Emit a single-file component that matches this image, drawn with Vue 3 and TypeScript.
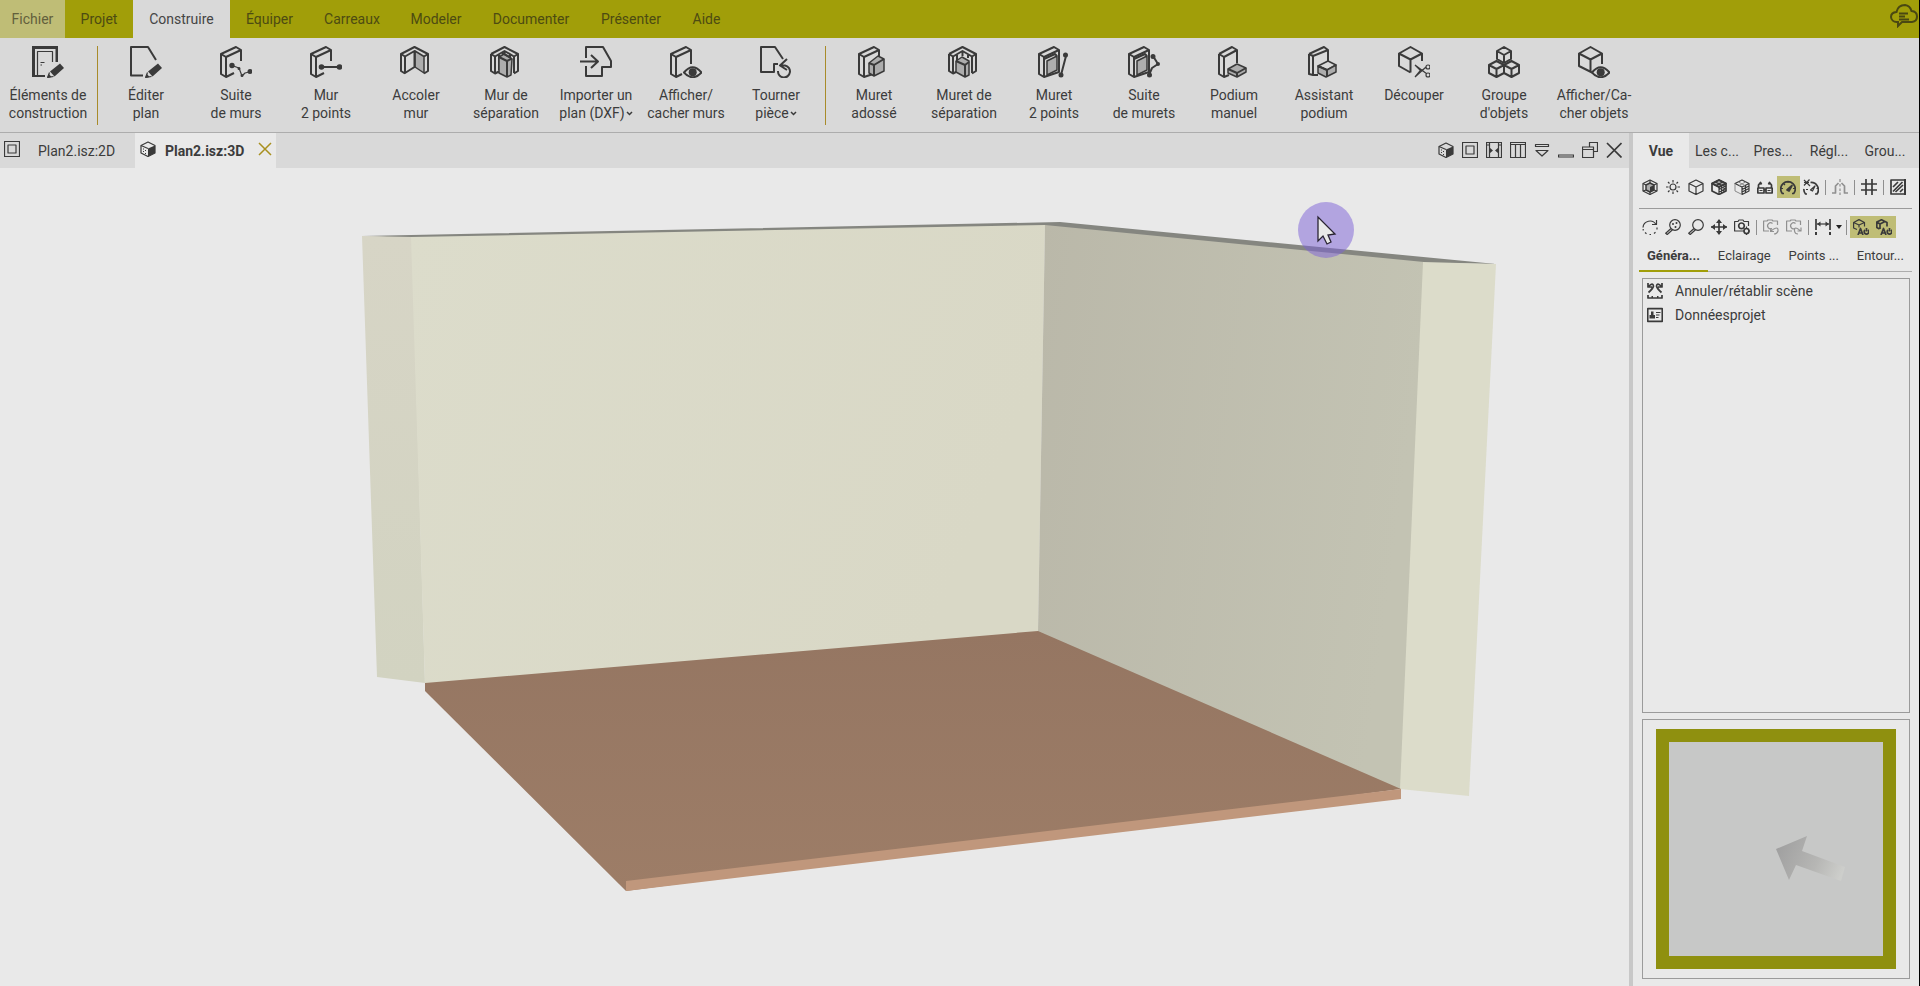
<script setup lang="ts">
import { ref } from 'vue'

type Kind = 'line' | 'thin' | 'solid' | 'shade' | 'paper'
type Shape = [Kind, string]

const dot = (x: number, y: number, r: number): string =>
  `M${x - r} ${y}a${r} ${r} 0 1 0 ${2 * r} 0a${r} ${r} 0 1 0 ${-2 * r} 0z`

const pencil: Shape[] = [
  ['solid', 'M18 25.5L28 17.5L32 22L22.500 30.500z'],
  ['thin', 'M17.500 26.500L15.700 31.300L21.500 30.500'],
  ['solid', 'M17 28L15 32L19.500 31z'],
]
const slab: Shape[] = [
  ['line', 'M21 15V4L16 1L1 8V28L6 31L14 27'],
  ['line', 'M1 8L6 11L21 4M6 11V31'],
]
const eye: Shape[] = [
  ['line', 'M14 26.500Q22.500 16 31.500 26.500Q22.500 36 14 26.500z'],
  ['solid', dot(22.700, 26.300, 4)],
]
const pages: Shape[] = [
  ['line', 'M1 8L16 1L21 4V26L6 31L1 28z'],
  ['line', 'M1 8L6 11L21 4M6 11V31'],
]
const cornerWalls: Shape[] = [
  ['line', 'M1 8L14.500 1L28 8V25L24 27.500M1 8V25L5 27.500L9 25.500'],
  ['line', 'M1 8L5 10.500L14.500 5L24 10.500L28 8M5 10.500V27M24 10.500V27M14.500 5V10M9 9V24M20 9V12'],
]
const cube: Shape[] = [['line', 'M14 26.500L1 20V7.500L12.500 1L24 7.500V18M1 7.500L12.500 13.500L24 7.500M12.500 13.500V26']]

const icons: Record<string, Shape[]> = {
  door: [
    ['solid', 'M0 0H26V16H23.500V3H3V29H13V31H0z'],
    ['thin', 'M5.500 29V5.500H20.500V16'],
    ['thin', 'M8.500 16.500H12.500M8.500 19H10'],
    ...pencil,
  ],
  edit: [['line', 'M13 29.500H1V1H18L26 14'], ...pencil],
  suite: [...slab, ['thin', 'M12 19.500L19 22L22 30L25 27L31 25.500'], ['solid', dot(12, 19.500, 2.700) + dot(19, 22.500, 1.500) + dot(30, 25.500, 2.500) + dot(22, 29.500, 1.500)]],
  two: [...slab, ['line', 'M12 21H30'], ['solid', dot(11.500, 21, 2.800) + dot(29.500, 21, 2.800)]],
  join: [
    ['line', 'M5 27.500L1 25V8L14.500 1L28 8V25L24 27.500'],
    ['shade', 'M15 5L24 10.500V27L15 21z'],
    ['line', 'M1 8L5 10.500L14.500 5V21L5 27V10.500M24 10.500L28 8'],
  ],
  partition: [
    ...cornerWalls,
    ['shade', 'M9 11L14 8L22 13L21 29L17 31L9 27z'],
    ['line', 'M9 11L17 15L22 12.500M17 15V31M12 7L20 11'],
  ],
  import: [['line', 'M6 12V1H23L31 15V21H22V30H6V20'], ['line', 'M0 15.500H18M11 9L18 15.500L11 22']],
  showWall: [['line', 'M21 18V4L16 1L1 8V28L6 31L12 28'], ['line', 'M1 8L6 11L21 4M6 11V31'], ...eye],
  turn: [
    ['line', 'M18 18H14V26H1V1H15L23 13'],
    ['line', 'M20 19.500H25A6 6 0 1 1 18 25M27 13L20 19.500L27 24'],
  ],
  lean: [...pages, ['shade', 'M11 17L20 10L26 13V25L16 30L11 27z'], ['line', 'M11 17L16 19L26 13M16 19V30']],
  lowPartition: [...cornerWalls, ['shade', 'M8 15L14 11L21 15V29L17 31L8 26z'], ['line', 'M8 15L17 19L21 16M17 19V31']],
  lowTwo: [...pages, ['shade', 'M9 15L19 10V24L9 29z'], ['line', 'M6 13L17 8L19 10M28 10L23 29'], ['solid', dot(27.500, 9, 2.500) + dot(23, 29, 2.500)]],
  lowSuite: [...pages, ['shade', 'M9 15L19 10V24L9 29z'], ['line', 'M6 13L17 8L19 10M25 10L30 18L24 22L21 29'], ['solid', dot(25, 10.500, 2.500) + dot(30, 18, 2) + dot(21.500, 29, 2.500)]],
  podium: [
    ['line', 'M1 8L14 1L19 4V17M1 8V28L6 31L11 29M1 8L6 11L19 4M6 11V31'],
    ['shade', 'M10 23L19 18L28 22V26L19 31L10 27z'],
    ['line', 'M10 23L19 27L28 22M19 27V31'],
  ],
  podiumHelp: [
    ['line', 'M1 8L16 1L20 4V15M1 8V28L5 29M1 8L5 10L20 4M5 10V29L10 29'],
    ['paper', 'M10 20L20 15L28 19L19 24z'],
    ['shade', 'M19 24L28 19V26L18 31L10 27V20z'],
    ['line', 'M10 20L19 24V31'],
  ],
  cut: [
    ['line', 'M12.500 26.500L1 20V7.500L12.500 1L24 7.500V15M1 7.500L12.500 13.500L24 7.500M12.500 13.500V26.500'],
    ['thin', 'M17 19L29 28M17 31L28 21M17 19L23 25M17 31L22 25' + dot(30, 21, 2) + dot(30, 29, 2)],
  ],
  group: [
    ['line', 'M16 1L23 5V13L16 17L9 13V5zM9 5L16 9L23 5M16 9V17'],
    ['line', 'M8.500 15L16 19V27L8.500 31L1 27V19zM1 19L8.500 23L16 19M8.500 23V31'],
    ['line', 'M23.500 15L31 19V27L23.500 31L16 27V19zM16 19L23.500 23L31 19M23.500 23V31'],
  ],
  showObject: [...cube, ...eye],
}

const small: Record<string, Shape[]> = {
  cubeSolid: [['thin', 'M1 4.500L8 1L15 4.500V12L8 15.500L1 12z'], ['solid', 'M8 7.500L15 4.500V12L8 15.500z'], ['thin', 'M1 4.500L8 7.500'], ['solid', 'M3 7.500h1v1h-1zM5 9h1v1h-1zM3 10h1v1h-1zM5 12h1v1h-1z']],
  frame: [['thin', 'M.5 .5H15.500V15.500H.5zM4 4H12V12H4z']],
  split: [['thin', 'M.5 .5H15.500V15.500H.5zM3.500 .5V15.500M12.500 .5V15.500M.5 3H3.500M12.500 3H15.500'], ['solid', 'M3.500 5.500L7 8.500L3.500 11.500zM12.500 5.500L9 8.500L12.500 11.500z']],
  columns: [['thin', 'M.5 .5H15.500V15.500H.5zM.5 2.500H15.500M5.500 2.500V15.500M10.500 2.500V15.500']],
  drop: [['thin', 'M1.500 2.500H14.500V4.500H1.500zM2 8.500H14L8 14z']],
  minimise: [['thin', 'M.5 13H15.500V15H.5z']],
  restore: [['thin', 'M.5 5H11.500V15.500H.5zM.5 7.500H11.500M7.500 5V.5H15.500V9.500H11.500']],
  close: [['line', 'M1 1L15.500 15.500M15.500 1L1 15.500']],
  cubeFull: [
    ['thin', 'M1 4.500L8 1L15 4.500V12L8 15.500L1 12z'],
    ['shade', 'M4 6L8 4L12 6V11L8 13L4 11z'],
    ['solid', 'M8 8L12 6V11L8 13z'],
    ['thin', 'M1 4.500L4 6M15 4.500L12 6M8 1V4M8 13V15.500M1 12L4 11M15 12L12 11'],
  ],
  sun: [['thin', dot(8, 8, 3) + 'M8 1V3.500M8 12.500V15M1 8H3.500M12.500 8H15M3 3L4.500 4.500M11.500 11.500L13 13M3 13L4.500 11.500M11.500 4.500L13 3']],
  cubeLine: [['thin', 'M1 4.500L8 1L15 4.500V12L8 15.500L1 12zM1 4.500L8 8L15 4.500M8 8V15.500']],
  cubeDark: [
    ['shade', 'M1 4.500L8 1L15 4.500L8 8z'],
    ['line', 'M1 4.500L8 1L15 4.500V12L8 15.500L1 12zM1 4.500L8 8L15 4.500'],
    ['thin', 'M8 8V15M10.500 7V14M13 5.500V13M8 10.500L15 7M8 13L15 9.500M4.500 3L11 6.500M11.500 3L5 6.500'],
  ],
  cubeGrid: [
    ['thin', 'M1 4.500L8 1L15 4.500L8 8zM8 8V15.500L15 12V4.500M11.500 6.500V14M8 10.500L15 7M8 13L15 9.500'],
    ['hair', 'M1 4.500V12L8 15.500M4.500 3L11 6.500M11.500 3L5 6.500'] as unknown as Shape,
  ],
  glasses: [['line', 'M.8 9H7V14H.8zM9 9H15.200V14H9zM7 11H9M1.500 9V6L3.500 3.500L4.500 5.500M14.500 9V6L12.500 3.500L11.500 5.500'], ['thin', 'M2.500 11.500H5.500M10.500 11.500H13.500']],
  gauge: [['line', 'M4 14.500H2.300A7.300 7.300 0 1 1 13.700 14.500H12'], ['thin', 'M1 9.500H3M13 9.500H15M3.500 4.500L5 6M8 2V4'], ['line', 'M7 11L12 6.500L9 12z']],
  gaugeCross: [['line', 'M4 15H2.500A6 6 0 0 1 1 10M7.500 3.500A7.300 7.300 0 0 1 14 15H12'], ['thin', 'M1 1L7 7M6.500 .5L1 6.500M1 3.500H6M7.500 11L12 7L9.500 12zM13.500 9.500H15'], ['thin', 'M5 10.500H3']],
  bell: [['line', 'M0 14H3.500V7L6.500 4M16 14H12.500V7L9.500 4'], ['thin', 'M8 0V3M8 5V7.500M8 9.500V12M8 13.500V16']],
  grid: [['line', 'M0 5H16M0 11H16M5 0V16M11 0V16']],
  hatch: [['line', 'M1 1H15V15H1z'], ['line', 'M3 8L8 3M3 12.500L12.500 3M5.500 13L13 6M10 13L13 10'], ['solid', 'M14 0H16V16H14z']],
  rotate: [['thin', 'M14.500 1V5.500H10'], ['thin', 'M14 5.500A7 7 0 0 0 1 8.500'], ['thin', 'M1.200 10V11.500M3 13.500L4.500 14.700M7.500 15.500H9M12 14.500L13.500 13.200M15 10.500V8.500']],
  zoomPlus: [['thin', dot(10, 6, 5.300) + 'M6 9.500L.7 14.300L2.200 15.500L7.500 10.800'], ['solid', dot(8, 5, 1) + dot(11.500, 4, 1) + dot(10.500, 8, 1)]],
  zoom: [['thin', dot(10, 6, 5.300) + 'M6 9.500L.7 14.300L2.200 15.500L7.500 10.800']],
  move: [['line', 'M0 8H16M8 1V15'], ['solid', 'M8 0L5 4H11zM8 16L5 12H11zM0 8L4 5V11zM16 8L12 5V11z']],
  camera: [['thin', 'M8 12H.6V2.500H4L5 1H9L10 2.500H14.500V7'], ['line', dot(7.500, 6.800, 2.800)], ['line', dot(12.500, 12, 2.500)], ['thin', 'M12.500 7.500V9.500M12.500 14.500V16M8 12H10M15 12H16']],
  cameraUndo: [['thin', 'M6 12H.6V2H4L5 1H9L10 2H14.500V6M9 9.500A3 3 0 1 1 9.500 4.500'], ['thin', 'M8 9L7.500 12.500L11 12.500M8 12Q15.500 6 15 12Q14 15 11 15']],
  cameraRedo: [['thin', 'M6 12H.6V2H4L5 1H9L10 2H14.500V6M9 9.500A3 3 0 1 1 9.500 4.500'], ['thin', 'M15 8.500V12H11.500M14.500 12Q8 6 8.500 12Q9 15 12 15']],
  measure: [['line', 'M1 0V11M15 0V11'], ['thin', 'M2 5H14'], ['solid', 'M2 5L5.500 2.500V7.500zM14 5L10.500 2.500V7.500zM0 13H2V16H0zM14 13H16V16H14z']],
  autoCube: [['thin', 'M4 10.500L.6 9V3.500L6 .6L11.500 3.500V7.500M.6 3.500L6 6L11.500 3.500M6 6V8.500'], ['line', 'M5 16L7.500 9.500L10 16M6 14H9'], ['line', 'M12 11A2.300 2.300 0 1 0 15 11M13.500 9V12.500']],
  autoWall: [['line', 'M3.500 10L.8 8.500V3L5.500 .8L11 3.500V7.500M.8 3L4 5V10M4 5L9 2.500'], ['line', 'M5 16L7.500 9.500L10 16M6 14H9'], ['line', 'M12 11A2.300 2.300 0 1 0 15 11M13.500 9V12.500']],
  undoScene: [['line', 'M1 0V4H5M1.500 3.500Q6 -1 6.500 3Q6 5.500 1.500 9.500M15 0V4H11M14.500 3.500Q10 -1 9.500 3Q10 5.500 14.500 9.500M1 12V15H15V12'], ['solid', 'M4.500 13H6V15H4.500zM10 13H11.500V15H10z']],
  data: [['line', 'M.7 1.700H15.300V14.300H.7z'], ['solid', 'M4 4.500H6.500V8H8V11.500H2.500V8H4z'], ['thin', 'M9 5.500H13.500M9 8H12.500M9 10.500H11.500']],
}

interface Tool { icon: string; lines: string[]; menu?: boolean }
const groups: Tool[][] = [
  [{ icon: 'door', lines: ['Éléments de', 'construction'] }],
  [
    { icon: 'edit', lines: ['Éditer', 'plan'] },
    { icon: 'suite', lines: ['Suite', 'de murs'] },
    { icon: 'two', lines: ['Mur', '2 points'] },
    { icon: 'join', lines: ['Accoler', 'mur'] },
    { icon: 'partition', lines: ['Mur de', 'séparation'] },
    { icon: 'import', lines: ['Importer un', 'plan (DXF)'], menu: true },
    { icon: 'showWall', lines: ['Afficher/', 'cacher murs'] },
    { icon: 'turn', lines: ['Tourner', 'pièce'], menu: true },
  ],
  [
    { icon: 'lean', lines: ['Muret', 'adossé'] },
    { icon: 'lowPartition', lines: ['Muret de', 'séparation'] },
    { icon: 'lowTwo', lines: ['Muret', '2 points'] },
    { icon: 'lowSuite', lines: ['Suite', 'de murets'] },
    { icon: 'podium', lines: ['Podium', 'manuel'] },
    { icon: 'podiumHelp', lines: ['Assistant', 'podium'] },
    { icon: 'cut', lines: ['Découper'] },
    { icon: 'group', lines: ['Groupe', "d'objets"] },
    { icon: 'showObject', lines: ['Afficher/Ca-', 'cher objets'] },
  ],
]

const menus = ['Fichier', 'Projet', 'Construire', 'Équiper', 'Carreaux', 'Modeler', 'Documenter', 'Présenter', 'Aide']
const menu = ref('Construire')

const windowTools = [
  { icon: 'cubeSolid', label: 'Vue 3D' },
  { icon: 'frame', label: 'Vue 2D' },
  { icon: 'split', label: 'Ajuster' },
  { icon: 'columns', label: 'Colonnes' },
  { icon: 'drop', label: 'Liste' },
  { icon: 'minimise', label: 'Réduire' },
  { icon: 'restore', label: 'Restaurer' },
  { icon: 'close', label: 'Fermer' },
]

const panels = ['Vue', 'Les c...', 'Pres...', 'Régl...', 'Grou...']
const panel = ref('Vue')
const sections = ['Généra...', 'Eclairage', 'Points ...', 'Entour...']
const section = ref('Généra...')

const viewRows: string[][] = [
  ['cubeFull', 'sun', 'cubeLine', 'cubeDark', 'cubeGrid', 'glasses', 'gauge', 'gaugeCross', '|', 'bell', '|', 'grid', '|', 'hatch'],
  ['rotate', 'zoomPlus', 'zoom', 'move', 'camera', '|', 'cameraUndo', 'cameraRedo', '|', 'measure', 'v', '|', 'autoCube', 'autoWall'],
]
const active = ref(['gauge', 'autoCube', 'autoWall'])
const faded = ['bell', 'cameraUndo', 'cameraRedo']
</script>

<template>
  <div class="app">
    <nav class="menubar">
      <button
        v-for="m in menus" :key="m" type="button" class="menu"
        :class="{ file: m === 'Fichier', current: m === menu }" @click="menu = m"
      >{{ m }}</button>
      <button type="button" class="cloud" aria-label="Messages">
        <svg viewBox="0 0 28 24" width="28" height="24">
          <path d="M6.500 18A5.500 5.500 0 0 1 1 13Q1 8.500 6.500 8Q8 1 15 1Q20 1.500 21.500 7Q27 7.500 27 12.500Q27 17.500 22 18H12L8 22V18z" />
          <path d="M9 9.500H18M9 12.500H15M9 15.500H19" />
        </svg>
      </button>
    </nav>

    <div class="ribbon">
      <div v-for="(g, i) in groups" :key="i" class="group">
        <button v-for="t in g" :key="t.icon" type="button" class="tool">
          <svg class="icon" viewBox="0 0 32 32" width="32" height="32" aria-hidden="true">
            <path v-for="(s, k) in icons[t.icon]" :key="k" :class="s[0]" :d="s[1]" />
          </svg>
          <span class="caption">
            <span v-for="(l, k) in t.lines" :key="k" class="row">{{ l }}<svg
              v-if="t.menu && k === 1" class="chevron" viewBox="0 0 7 5" width="7" height="5" aria-hidden="true"
            ><path d="M1 1L3.500 3.500L6 1" /></svg></span>
          </span>
        </button>
      </div>
    </div>

    <div class="workspace">
      <main class="document">
        <div class="tabs">
          <button type="button" class="tab plan">
            <svg class="icon" viewBox="0 0 16 16" width="16" height="16" aria-hidden="true">
              <path v-for="(s, k) in small.frame" :key="k" :class="s[0]" :d="s[1]" />
            </svg>
            <span>Plan2.isz:2D</span>
          </button>
          <div class="tab open">
            <button type="button" class="name">
              <svg class="icon" viewBox="0 0 16 16" width="16" height="16" aria-hidden="true">
                <path v-for="(s, k) in small.cubeSolid" :key="k" :class="s[0]" :d="s[1]" />
              </svg>
              <span>Plan2.isz:3D</span>
            </button>
            <button type="button" class="shut" aria-label="Fermer l'onglet">
              <svg viewBox="0 0 14 14" width="14" height="14"><path d="M1 1L13 13M13 1L1 13" /></svg>
            </button>
          </div>
          <div class="window-tools">
            <button v-for="w in windowTools" :key="w.icon" type="button" :aria-label="w.label">
              <svg class="icon" viewBox="0 0 16 16" width="16" height="16">
                <path v-for="(s, k) in small[w.icon]" :key="k" :class="s[0]" :d="s[1]" />
              </svg>
            </button>
          </div>
        </div>

        <svg class="scene" viewBox="0 168 1629 818" role="img" aria-label="Pièce en 3D">
          <defs>
            <linearGradient id="back" x1="0" y1="0" x2="1" y2="0.300">
              <stop offset="0" stop-color="#dcdccb" /><stop offset="1" stop-color="#d9d8c6" />
            </linearGradient>
            <linearGradient id="side" x1="0" y1="0" x2="1" y2="0.200">
              <stop offset="0" stop-color="#bab8a9" /><stop offset="1" stop-color="#c3c3b3" />
            </linearGradient>
            <linearGradient id="left" x1="0" y1="0" x2="0" y2="1">
              <stop offset="0" stop-color="#d7d5c6" /><stop offset="1" stop-color="#d2d3c1" />
            </linearGradient>
            <linearGradient id="floor" x1="0" y1="0" x2="0" y2="1">
              <stop offset="0" stop-color="#957662" /><stop offset="1" stop-color="#9d7d67" />
            </linearGradient>
          </defs>
          <path fill="#858680" d="M362 236L1060 222L1496 264L1423 263L1045 226L412 238z" />
          <path fill="url(#left)" d="M362 236L412 237L425 683L377 677z" />
          <path fill="url(#back)" d="M411 237L1045 225L1038 632L425 684z" />
          <path fill="url(#side)" d="M1045 225L1424 262L1401 790L1038 632z" />
          <path fill="#dcdcca" d="M1423 262L1496 264L1469 796L1400 789z" />
          <path fill="url(#floor)" d="M425 683L1038 631L1401 789L626 891L425 691z" />
          <path fill="#c0977c" d="M626 881L1401 789V799L626 891z" />
          <circle cx="1326" cy="230" r="28" fill="#7c60d8" fill-opacity="0.500" />
          <path class="pointer" d="M1318 217V241L1323 236L1327 244L1331 242L1328 235L1335 234z" />
        </svg>
      </main>

      <aside class="side">
        <div class="panel-tabs">
          <button v-for="p in panels" :key="p" type="button" :class="{ current: p === panel }" @click="panel = p">{{ p }}</button>
        </div>
        <div class="panel">
          <div v-for="(r, i) in viewRows" :key="i" class="view-row">
            <template v-for="(n, j) in r" :key="j">
              <span v-if="n === '|'" class="bar"></span>
              <button v-else-if="n === 'v'" type="button" class="more" aria-label="Plus"></button>
              <button v-else type="button" class="view" :class="{ on: active.includes(n), faded: faded.includes(n) }" :aria-label="n">
                <svg class="icon" viewBox="0 0 16 16" width="16" height="16">
                  <path v-for="(s, k) in small[n]" :key="k" :class="s[0]" :d="s[1]" />
                </svg>
              </button>
            </template>
          </div>
          <div class="sections">
            <button v-for="s in sections" :key="s" type="button" :class="{ current: s === section }" @click="section = s">{{ s }}</button>
          </div>
          <ul class="actions">
            <li>
              <button type="button">
                <svg class="icon" viewBox="0 0 16 16" width="16" height="16" aria-hidden="true">
                  <path v-for="(s, k) in small.undoScene" :key="k" :class="s[0]" :d="s[1]" />
                </svg>
                Annuler/rétablir scène
              </button>
            </li>
            <li>
              <button type="button">
                <svg class="icon" viewBox="0 0 16 16" width="16" height="16" aria-hidden="true">
                  <path v-for="(s, k) in small.data" :key="k" :class="s[0]" :d="s[1]" />
                </svg>
                Donnéesprojet
              </button>
            </li>
          </ul>
          <div class="overview">
            <svg viewBox="0 0 240 240" role="img" aria-label="Plan de situation">
              <defs>
                <linearGradient id="arrow" gradientUnits="userSpaceOnUse" x1="121" y1="120" x2="184" y2="148">
                  <stop offset="0" stop-color="#a0a0a0" /><stop offset="0.600" stop-color="#b6b6b4" /><stop offset="1" stop-color="#cdcecb" />
                </linearGradient>
              </defs>
              <path fill="#8f900f" d="M0 0H240V240H0z" />
              <path fill="#c7c8c7" d="M13 13H227V227H13z" />
              <path fill="url(#arrow)" d="M120 120L151 107L146 122L189 138L185 152L140 136L133 151z" />
            </svg>
          </div>
        </div>
      </aside>
    </div>
  </div>
</template>

<style>
html,
body,
#app {
  height: 100%;
}
body {
  margin: 0;
}
</style>

<style scoped>
.app {
  box-sizing: border-box;
  display: flex;
  flex-direction: column;
  height: 100%;
  border-right: 1px solid #000;
  background: #d9d9d9;
  color: #3c3c3c;
  font-family: Roboto, "Liberation Sans", sans-serif;
  font-size: 14px;
  line-height: 18px;
}
button {
  margin: 0;
  padding: 0;
  border: 0;
  background: none;
  color: inherit;
  font: inherit;
  white-space: nowrap;
}
svg {
  display: block;
  flex: none;
}
.menubar {
  display: grid;
  grid-template-columns: 65px 68px 97px 79px 86px 82px 108px 92px 59px 1fr;
  height: 38px;
  background: #a19e09;
  color: #4d4b12;
}
.menu {
  padding-bottom: 1px;
}
.menu.file {
  background: #bfbd76;
  color: #62603c;
}
.menu.current {
  background: #d9d9d9;
  color: #454545;
}
.cloud {
  justify-self: end;
  padding: 0 1px 6px 0;
}
.cloud path {
  fill: none;
  stroke: #4a4812;
  stroke-width: 2;
}
.icon path {
  fill: none;
  stroke: #3a3a3a;
  stroke-linejoin: round;
}
.icon .line {
  stroke-width: 1.700px;
}
.icon .thin {
  stroke-width: 1.200px;
}
.icon .hair {
  stroke: #8a8a8a;
  stroke-width: 1px;
}
.icon .solid {
  fill: #3a3a3a;
  stroke: none;
}
.icon .shade {
  fill: #adadad;
  stroke-width: 1.500px;
}
.icon .paper {
  fill: #d9d9d9;
  stroke-width: 1.500px;
}
.ribbon {
  display: flex;
  height: 94px;
  border-bottom: 1px solid #adadad;
}
.group {
  display: flex;
}
.group + .group::before {
  content: "";
  width: 1px;
  margin: 8px 3px 7px 4px;
  background: #a88b2a;
}
.tool {
  display: flex;
  flex-direction: column;
  align-items: center;
  width: 90px;
  padding-top: 8px;
}
.group:first-child .tool {
  width: 93px;
  padding-left: 3px;
}
.ribbon .line {
  stroke-width: 2px;
}
.caption {
  margin-top: 8px;
}
.row {
  display: flex;
  align-items: center;
  justify-content: center;
}
.chevron {
  margin-left: 1px;
}
.chevron path {
  fill: none;
  stroke: #3a3a3a;
  stroke-width: 1.500px;
}
.workspace {
  display: flex;
  flex: 1;
  min-height: 0;
}
.document {
  display: flex;
  flex: 1;
  flex-direction: column;
  min-width: 0;
}
.tabs {
  display: flex;
  height: 35px;
}
.tab {
  display: flex;
  align-items: center;
}
.plan {
  width: 135px;
  padding-bottom: 3px;
  padding-left: 4px;
  gap: 18px;
}
.open {
  padding: 0 4px 3px 5px;
  background: #e9e9e9;
  gap: 14px;
}
.name {
  display: flex;
  align-items: center;
  gap: 9px;
  font-weight: 700;
}
.tab span {
  padding-top: 3px;
}
.shut path {
  fill: none;
  stroke: #a8901f;
  stroke-width: 1.500px;
}
.window-tools {
  display: flex;
  align-items: center;
  gap: 8px;
  margin-left: auto;
  padding: 0 7px 2px 0;
}
.scene {
  flex: 1;
  width: 100%;
  min-height: 0;
  background: #e9e9e9;
}
.pointer {
  fill: #e9e9e9;
  stroke: #2a2433;
  stroke-width: 1.300px;
}
.side {
  display: flex;
  flex-direction: column;
  width: 286px;
  border-left: 4px solid #c8c8c8;
}
.panel-tabs {
  display: flex;
  height: 35px;
  padding-right: 6px;
}
.panel-tabs button {
  flex: 1;
}
.panel-tabs .current {
  background: #e9e9e9;
  font-weight: 700;
}
.panel {
  display: flex;
  flex: 1;
  flex-direction: column;
  min-height: 0;
  padding: 0 7px 7px 6px;
  background: #e9e9e9;
}
.view-row {
  display: flex;
  align-items: center;
  height: 38px;
  margin-bottom: 2px;
}
.view-row + .view-row {
  height: 36px;
  margin: 0;
  border-top: 1px solid #9b9b9b;
}
.view {
  display: flex;
  align-items: center;
  width: 23px;
  height: 22px;
  padding-left: 3px;
}
.view.on {
  background: #bfbd76;
}
.view.faded {
  opacity: 0.500;
}
.bar {
  width: 1px;
  height: 15px;
  margin: 0 3px 0 2px;
  background: #8f8f8f;
}
.more {
  margin: 0 2px 0 1px;
  border: solid transparent;
  border-width: 4px 3px 0;
  border-top-color: #222;
}
.sections {
  display: flex;
  justify-content: space-between;
  height: 26px;
  margin-bottom: 6px;
  border-bottom: 1px solid #adadad;
  font-size: 13px;
}
.sections button {
  padding: 0 8px 3px;
  border-bottom: 2px solid transparent;
  box-sizing: border-box;
  height: 27px;
}
.sections .current {
  border-bottom-color: #a19e09;
  font-weight: 700;
}
.actions {
  flex: 1;
  margin: 0 2px 6px 3px;
  padding: 0;
  border: 1px solid #9b9b9b;
  list-style: none;
}
.actions button {
  display: flex;
  align-items: center;
  gap: 12px;
  height: 24px;
  padding-left: 4px;
}
.overview {
  margin: 0 2px 0 3px;
  padding: 9px 13px;
  border: 1px solid #9b9b9b;
}
.overview svg {
  width: 100%;
}
</style>
